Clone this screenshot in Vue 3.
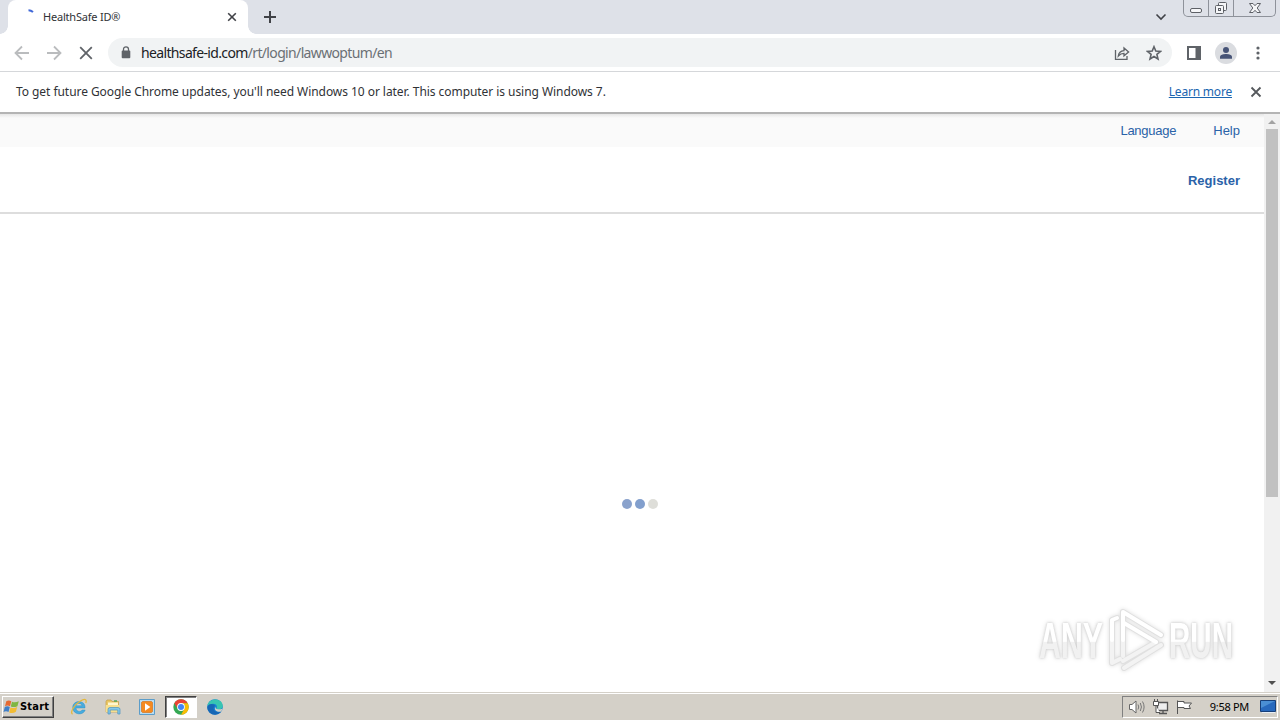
<template>
  <div class="screen">
    <header class="tabstrip">
      <div class="tab">
        <svg class="spinner" width="16" height="16" viewBox="0 0 16 16"><path d="M7.5 2.2Q10 2.2 12 4" /></svg>
        <span class="tab-title">HealthSafe ID®</span>
        <svg class="tab-close" width="10" height="10" viewBox="0 0 10 10"><path d="M1.2 1.2L8.8 8.8M8.8 1.2L1.2 8.8" /></svg>
      </div>
      <svg class="new-tab" width="14" height="14" viewBox="0 0 14 14"><path d="M7 1V13M1 7H13" /></svg>
      <svg class="tab-search" width="12" height="8" viewBox="0 0 12 8"><path d="M1.5 1.5L6 6L10.5 1.5" /></svg>
      <div class="window-buttons">
        <span class="window-button">
          <svg width="14" height="8" viewBox="0 0 14 8"><rect x="1.5" y="2.5" width="11" height="4" rx="1.5" /></svg>
        </span>
        <span class="window-button">
          <svg width="14" height="14" viewBox="0 0 14 14">
            <rect x="4.5" y="1.5" width="8" height="8" rx="1" />
            <rect x="1.5" y="4.5" width="8" height="8" rx="1" />
            <rect x="4.5" y="7.5" width="2" height="2" />
          </svg>
        </span>
        <span class="window-button close">
          <svg width="14" height="12" viewBox="0 0 14 12"><path d="M1.5 1.5H5L7 3.7L9 1.5H12.5L9.2 6L12.5 10.5H9L7 8.3L5 10.5H1.5L4.8 6Z" /></svg>
        </span>
      </div>
    </header>

    <div class="toolbar">
      <svg class="nav disabled" width="16" height="16" viewBox="0 0 16 16"><path d="M15 8H2M8 1.5L1.5 8L8 14.5" /></svg>
      <svg class="nav disabled" width="16" height="16" viewBox="0 0 16 16"><path d="M1 8H14M8 1.5L14.5 8L8 14.5" /></svg>
      <svg class="nav" width="16" height="16" viewBox="0 0 16 16"><path d="M2.2 2.2L13.8 13.8M13.8 2.2L2.2 13.8" /></svg>
      <div class="omnibox">
        <svg class="lock" width="10" height="13" viewBox="0 0 10 13">
          <path d="M2.5 5V3.3a2.5 2.5 0 0 1 5 0V5" fill="none" stroke="#5f6368" stroke-width="1.3" />
          <rect x="0.7" y="4.6" width="8.6" height="7.6" rx="1" fill="#5f6368" />
        </svg>
        <span class="url"><span class="host">healthsafe-id.com</span><span class="path">/rt/login/lawwoptum/en</span></span>
        <svg class="share" width="16" height="16" viewBox="0 0 16 16">
          <path d="M1.5 5V14.3H13V11" />
          <path d="M4.3 11C4.7 7.7 6.8 6 10 5.7V3L14.6 7L10 10.8V8.3C7.6 8.3 6 9 4.3 11Z" />
        </svg>
        <svg class="star" width="16" height="16" viewBox="0 0 16 16"><path d="M8 1.7L9.8 6L14.5 6.4L10.9 9.4L12 14L8 11.5L4 14L5.1 9.4L1.5 6.4L6.2 6Z" /></svg>
      </div>
      <svg class="side-panel" width="14" height="14" viewBox="0 0 14 14"><path d="M0 0H14V14H0ZM2 2V12H8.5V2Z" fill="#5f6368" fill-rule="evenodd" /></svg>
      <span class="avatar">
        <svg width="14" height="14" viewBox="0 0 14 14"><circle cx="7" cy="4" r="3" /><path d="M1 12.8V11C1 8.9 4.5 8.1 7 8.1S13 8.9 13 11V12.8Z" /></svg>
      </span>
      <svg class="menu" width="4" height="14" viewBox="0 0 4 14"><circle cx="2" cy="2" r="1.6" /><circle cx="2" cy="7" r="1.6" /><circle cx="2" cy="12" r="1.6" /></svg>
    </div>

    <div class="infobar">
      <span class="message">To get future Google Chrome updates, you'll need Windows 10 or later. This computer is using Windows 7.</span>
      <a class="learn-more">Learn more</a>
      <svg class="dismiss" width="12" height="12" viewBox="0 0 12 12"><path d="M1.5 1.5L10.5 10.5M10.5 1.5L1.5 10.5" /></svg>
    </div>

    <div class="viewport">
      <main class="page">
        <nav class="utility-bar">
          <a class="language">Language</a>
          <a class="help">Help</a>
        </nav>
        <div class="site-header"><a class="register">Register</a></div>
        <div class="content">
          <div class="loader">
            <span v-for="(color, i) in dots" :key="i" class="dot" :style="{ background: color }"></span>
          </div>
        </div>
      </main>
      <div class="scrollbar">
        <svg class="arrow" width="16" height="15" viewBox="0 0 16 15"><path d="M4 10L8 6L12 10Z" fill="#a3a3a3" /></svg>
        <div class="thumb"></div>
        <svg class="arrow down" width="16" height="16" viewBox="0 0 16 16"><path d="M4 5L8 9L12 5Z" fill="#505050" /></svg>
      </div>
      <svg class="watermark" width="220" height="80" viewBox="0 0 220 80">
        <defs>
          <linearGradient id="mark" x1="0" y1="22" x2="0" y2="58" gradientUnits="userSpaceOnUse">
            <stop offset="0.54" stop-color="#ffffff" />
            <stop offset="0.55" stop-color="#f1f1f1" />
          </linearGradient>
        </defs>
        <g class="letters" fill="url(#mark)">
          <text x="9" y="58" textLength="64" lengthAdjust="spacingAndGlyphs">ANY</text>
          <text x="139" y="58" textLength="64" lengthAdjust="spacingAndGlyphs">RUN</text>
        </g>
        <g class="play">
          <path class="edge" d="M87 18L82 20V63L90 59M93 56V12L131 35M94 23L126 42L93 61M131 45L94 68" />
          <path class="face shade" d="M82 40V63L90 59M93 40V56M126 42L93 61M131 45L94 68" />
          <path class="face" d="M87 18L82 20V40M93 40V12L131 35M94 23L126 42" />
        </g>
      </svg>
    </div>

    <footer class="taskbar">
      <div class="start">
        <svg width="17" height="16" viewBox="0 0 17 16">
          <path d="M3.3 2.3Q5.8.8 8.3 2.3L7 7.2Q4.5 5.8 2 7.2Z" fill="#e66a32" />
          <path d="M9 2.7Q12 4 15.8 2.3L14.4 7.2Q11 8.8 7.8 7.6Z" fill="#7fb642" />
          <path d="M1.8 8Q4.4 6.7 6.8 8.1L5.5 13Q3 11.6.5 13Z" fill="#407fc7" />
          <path d="M7.5 8.4Q11 9.7 14.2 8.1L12.9 12.7Q9.8 14.8 6.2 13.4Z" fill="#f2bc33" />
        </svg>
        <span class="start-label">Start</span>
      </div>
      <div class="quick-launch">
        <span class="app">
          <svg width="18" height="18" viewBox="0 0 18 18">
            <path d="M15 10H6C6.2 13.8 11 14.3 12 12H15.2C13.2 18 2.7 17 2.7 9.5C2.7 1.5 15.8 1.5 15 10ZM6 7.7H12C11.4 4.7 6.5 4.7 6 7.7Z" fill="#48acdf" stroke="#2689bd" stroke-width=".4" />
            <path d="M2.5 16.2C-.5 14 5 6.2 10 3.2S17 1.2 15.8 5" fill="none" stroke="#e4b83c" stroke-width="1.3" />
          </svg>
        </span>
        <span class="app">
          <svg width="18" height="18" viewBox="0 0 18 18">
            <path d="M2 3.5L3 2H7L8 3.5H14.5V14H2Z" fill="#e9c665" stroke="#c69e43" stroke-width=".7" />
            <path d="M4 4.5H14V7H4Z" fill="#fff7cf" /><path d="M10 3H13" stroke="#55a65b" stroke-width="1.5" />
            <path d="M1.8 7H15.5V14H1.8Z" fill="#f7df8e" />
            <path d="M4 16V11.5Q4 9.5 6 9.5H14Q16 9.5 16 11.5V16H13.8V12H6.2V16Z" fill="#85c8e9" stroke="#4b94bf" stroke-width=".7" />
          </svg>
        </span>
        <span class="app">
          <svg width="18" height="18" viewBox="0 0 18 18">
            <path d="M1.5 1.5H16.5V16.5H1.5Z" fill="#b9dcf0" stroke="#5c9dc9" />
            <path d="M4.5 3.5H13.5L14.5 4.5V13.5L13.5 14.5H4.5L3.5 13.5V4.5Z" fill="#f58a1f" stroke="#d46b10" stroke-width=".6" /><path d="M7 5.3V12.7L12.4 9Z" fill="#fff" />
          </svg>
        </span>
        <span class="app active">
          <svg width="18" height="18" viewBox="0 0 18 18">
            <circle cx="9" cy="9" r="7.7" fill="#34a853" />
            <path d="M2.3 5.2A7.7 7.7 0 0 1 15.7 5.2H9A3.8 3.8 0 0 0 5.7 11Z" fill="#ea4335" />
            <path d="M15.7 5.2A7.7 7.7 0 0 1 9 16.7L12.3 11A3.8 3.8 0 0 0 9 5.2Z" fill="#fbbc04" />
            <circle cx="9" cy="9" r="3.9" fill="#fff" /><circle cx="9" cy="9" r="3" fill="#4285f4" />
          </svg>
        </span>
        <span class="app">
          <svg width="18" height="18" viewBox="0 0 18 18">
            <circle cx="9" cy="9" r="7.8" fill="#1780d2" />
            <path d="M1.4 8C2.2-.5 16.4-.7 16.8 8C16.8 11.5 12 12.3 10.4 10.5C11.8 8 10 5.8 7 5.8Q3.5 5.8 1.4 8Z" fill="#38c5b2" />
            <path d="M1.3 9C2.5 5.2 8.3 5 9 8C6 10 8 14 12 14.2Q14 14.3 15.3 13.6C11.5 19 1.3 17 1.3 9Z" fill="#1767b5" />
            <path d="M10 8.2C8.3 10.4 11.3 12.4 16.6 10.7L15.2 13.5C10.5 14.8 7 11 10 8.2Z" fill="#d4d0c8" />
          </svg>
        </span>
      </div>
      <div class="tray">
        <svg width="18" height="16" viewBox="0 0 18 16">
          <path d="M1.5 5.5H4L8 2V14L4 10.5H1.5Z" fill="#fff" stroke="#666" />
          <path d="M10 5.5Q11.5 8 10 10.5M12.3 4Q14.6 8 12.3 12M14.5 2.5Q17.7 8 14.5 13.5" fill="none" stroke="#777" />
        </svg>
        <svg width="18" height="16" viewBox="0 0 18 16">
          <path d="M5.5 3.5H15.5V11.5H5.5ZM7 14.5H15M11 12V14" fill="#eee" stroke="#555" stroke-width="1.3" />
          <path d="M1.5 2.5H6.5V6.5H1.5ZM2.5 0V2M5.5 0V2M4 7V13.5H8" fill="#fff" stroke="#555" />
        </svg>
        <svg width="18" height="16" viewBox="0 0 18 16"><path d="M1.5 15V1.5M2 2.5H8V4H15.5L13 7L14.5 9.5H8V8.5H2" fill="#fff" stroke="#555" /></svg>
        <span class="clock">9:58 PM</span>
        <svg class="desktop" width="16" height="14" viewBox="0 0 16 14">
          <path d="M.5 .5H15.5V11.5H.5Z" fill="#2869bd" stroke="#173f79" />
          <path d="M1 1H15L1 8Z" fill="#4b8fd4" /><path d="M2 12.5H15" stroke="#e8eef5" />
        </svg>
      </div>
    </footer>
  </div>
</template>

<script setup>
// Loader dot colors
const dots = ['#8aa2cc', '#829fcd', '#deded9'];
</script>

<style>
body {
  margin: 0;
  overflow: hidden;
}
</style>

<style scoped>
.screen {
  width: 1280px;
  height: 720px;
  display: flex;
  flex-direction: column;
  overflow: hidden;
  background: #fff;
  font-family: "Noto Sans", "DejaVu Sans", sans-serif;
  color: #303236;
}

svg {
  display: block;
  flex-shrink: 0;
}

.tabstrip {
  height: 34px;
  display: flex;
  background: #dee1e8;
}

.tab {
  position: relative;
  box-sizing: border-box;
  width: 240px;
  height: 34px;
  margin-left: 8px;
  padding: 0 11px 0 14px;
  display: flex;
  align-items: center;
  background: #fff;
  border-radius: 8px 8px 0 0;
}

/* Curved feet of the active tab */
.tab::before,
.tab::after {
  content: "";
  position: absolute;
  bottom: 0;
  width: 8px;
  height: 8px;
}

.tab::before {
  left: -8px;
  background: radial-gradient(circle at 0 0, #dee1e8 7.5px, #fff 8px);
}

.tab::after {
  right: -8px;
  background: radial-gradient(circle at 100% 0, #dee1e8 7.5px, #fff 8px);
}

.spinner {
  align-self: flex-start;
  margin-top: 8px;
  margin-left: -1px;
  fill: none;
  stroke: #4169d8;
  stroke-width: 2;
}

.tab-title {
  margin-left: 6px;
  padding-bottom: 2px;
  flex: 1;
  font-size: 11px;
  letter-spacing: -0.2px;
  white-space: nowrap;
}

.tab-close,
.new-tab,
.tab-search {
  fill: none;
  stroke: #404247;
  stroke-width: 1.6;
}

.new-tab {
  margin: 10px 0 0 15px;
  stroke-width: 2;
}

.tab-search {
  margin: 13px 16px 0 auto;
}

.window-buttons {
  box-sizing: border-box;
  width: 93px;
  height: 17px;
  margin-right: 4px;
  display: flex;
  border: 1px solid #8e929a;
  border-top: 0;
  border-radius: 0 0 5px 5px;
}

.window-button {
  box-sizing: border-box;
  width: 25px;
  display: flex;
  align-items: center;
  justify-content: center;
  border-right: 1px solid #8e929a;
}

.window-button:first-child svg {
  margin-top: 4px;
}

.window-button.close {
  width: 41px;
  border-right: 0;
}

.window-button svg {
  fill: #f5f6f8;
  stroke: #5d6066;
}

.toolbar {
  box-sizing: border-box;
  height: 38px;
  padding-left: 14px;
  display: flex;
  align-items: center;
  border-bottom: 1px solid #d5d7da;
}

.nav {
  margin-right: 16px;
  fill: none;
  stroke: #5f6368;
  stroke-width: 1.8;
}

.nav.disabled {
  stroke: #babcbe;
}

.omnibox {
  box-sizing: border-box;
  width: 1064px;
  height: 29px;
  margin-left: -2px;
  padding: 0 10px 0 13px;
  display: flex;
  align-items: center;
  background: #f1f3f4;
  border-radius: 15px;
}

.url {
  margin-left: 10px;
  flex: 1;
  font-size: 14px;
  letter-spacing: -0.65px;
  white-space: nowrap;
}

.host {
  color: #202124;
}

.path {
  color: #6b7075;
}

.share,
.star {
  fill: none;
  stroke: #5f6368;
  stroke-width: 1.3;
}

.star {
  margin-left: 16px;
  stroke-width: 1.6;
}

.side-panel {
  margin-left: 15px;
}

.avatar {
  width: 22px;
  height: 22px;
  margin-left: 14px;
  display: flex;
  align-items: center;
  justify-content: center;
  border-radius: 50%;
  background: #dadce0;
}

.avatar svg {
  fill: #475477;
}

.menu {
  margin-left: 19px;
  fill: #5f6368;
}

.infobar {
  box-sizing: border-box;
  height: 42px;
  padding: 0 18px 1px 16px;
  display: flex;
  align-items: center;
  border-bottom: 2px solid #b4b4b4;
  font-size: 12px;
}

.message {
  flex: 1;
  letter-spacing: -0.055px;
  white-space: nowrap;
}

.learn-more {
  color: #1b65b0;
  letter-spacing: -0.2px;
  text-decoration: underline;
}

.dismiss {
  margin-left: 18px;
  stroke: #55585c;
  stroke-width: 1.8;
}

.viewport {
  position: relative;
  height: 578px;
  display: flex;
}

.page {
  width: 1264px;
  display: flex;
  flex-direction: column;
  font-family: "Liberation Sans", Arial, sans-serif;
  color: #2a62a8;
}

.utility-bar {
  height: 33px;
  display: flex;
  align-items: center;
  justify-content: flex-end;
  gap: 37px;
  padding-right: 24px;
  background: linear-gradient(#e6e6e6, #fafafa 4px);
  font-size: 13px;
}

.language {
  letter-spacing: -0.25px;
}

.site-header {
  box-sizing: border-box;
  height: 67px;
  padding: 2px 24px 0 0;
  display: flex;
  align-items: center;
  justify-content: flex-end;
  border-bottom: 2px solid #ddd;
  font-size: 13px;
  font-weight: bold;
}

.content {
  flex: 1;
  display: flex;
  justify-content: center;
}

.loader {
  display: flex;
  gap: 3px;
  margin: 285px 0 0 16px;
}

.dot {
  width: 10px;
  height: 10px;
  border-radius: 50%;
}

.scrollbar {
  width: 16px;
  display: flex;
  flex-direction: column;
  align-items: center;
  background: #f1f1f1;
}

.thumb {
  width: 12px;
  height: 368px;
  background: #c1c1c1;
}

.arrow.down {
  margin-top: auto;
}

.watermark {
  position: absolute;
  left: 1030px;
  top: 486px;
  overflow: visible;
}

.letters {
  font-family: "Liberation Sans", Arial, sans-serif;
  font-size: 50px;
  font-weight: bold;
  filter: drop-shadow(0 0 1px #ccc) drop-shadow(0 0 2px #ddd);
}

.play {
  fill: none;
  stroke-linejoin: round;
  stroke-linecap: round;
  filter: drop-shadow(0 0 2px #ddd);
}

.play .edge {
  stroke: #e0e0e0;
  stroke-width: 6;
}

.play .face {
  stroke: #fff;
  stroke-width: 4;
}

.play .face.shade {
  stroke: #f3f3f3;
}

.taskbar {
  box-sizing: border-box;
  height: 28px;
  padding: 2px;
  display: flex;
  align-items: center;
  background: #d4d0c8;
  border-top: 1px solid #d4d0c8;
  box-shadow: inset 0 1px #fff;
}

.start {
  box-sizing: border-box;
  width: 52px;
  height: 22px;
  display: flex;
  align-items: center;
  border: 1px solid;
  border-color: #fff #404040 #404040 #fff;
  box-shadow: inset -1px -1px #808080;
  color: #000;
}

.start-label {
  font-family: "DejaVu Sans Condensed", "DejaVu Sans", sans-serif;
  font-size: 11px;
  font-weight: bold;
  letter-spacing: 0.2px;
}

.quick-launch {
  margin-left: 9px;
  display: flex;
}

.app {
  box-sizing: border-box;
  width: 32px;
  height: 22px;
  margin-right: 2px;
  display: flex;
  align-items: center;
  justify-content: center;
}

.app.active {
  background: #fff;
  border: 1px solid;
  border-color: #404040 #fff #fff #404040;
  box-shadow: inset 1px 1px #808080;
}

.tray {
  box-sizing: border-box;
  width: 156px;
  height: 22px;
  margin-left: auto;
  padding: 0 1px 0 5px;
  display: flex;
  align-items: center;
  gap: 6px;
  border: 1px solid;
  border-color: #808080 #fff #fff #808080;
}

.clock {
  flex: 1;
  color: #000;
  font-size: 11px;
  letter-spacing: -0.3px;
  text-align: right;
  white-space: nowrap;
}

.desktop {
  margin-left: 5px;
}
</style>
